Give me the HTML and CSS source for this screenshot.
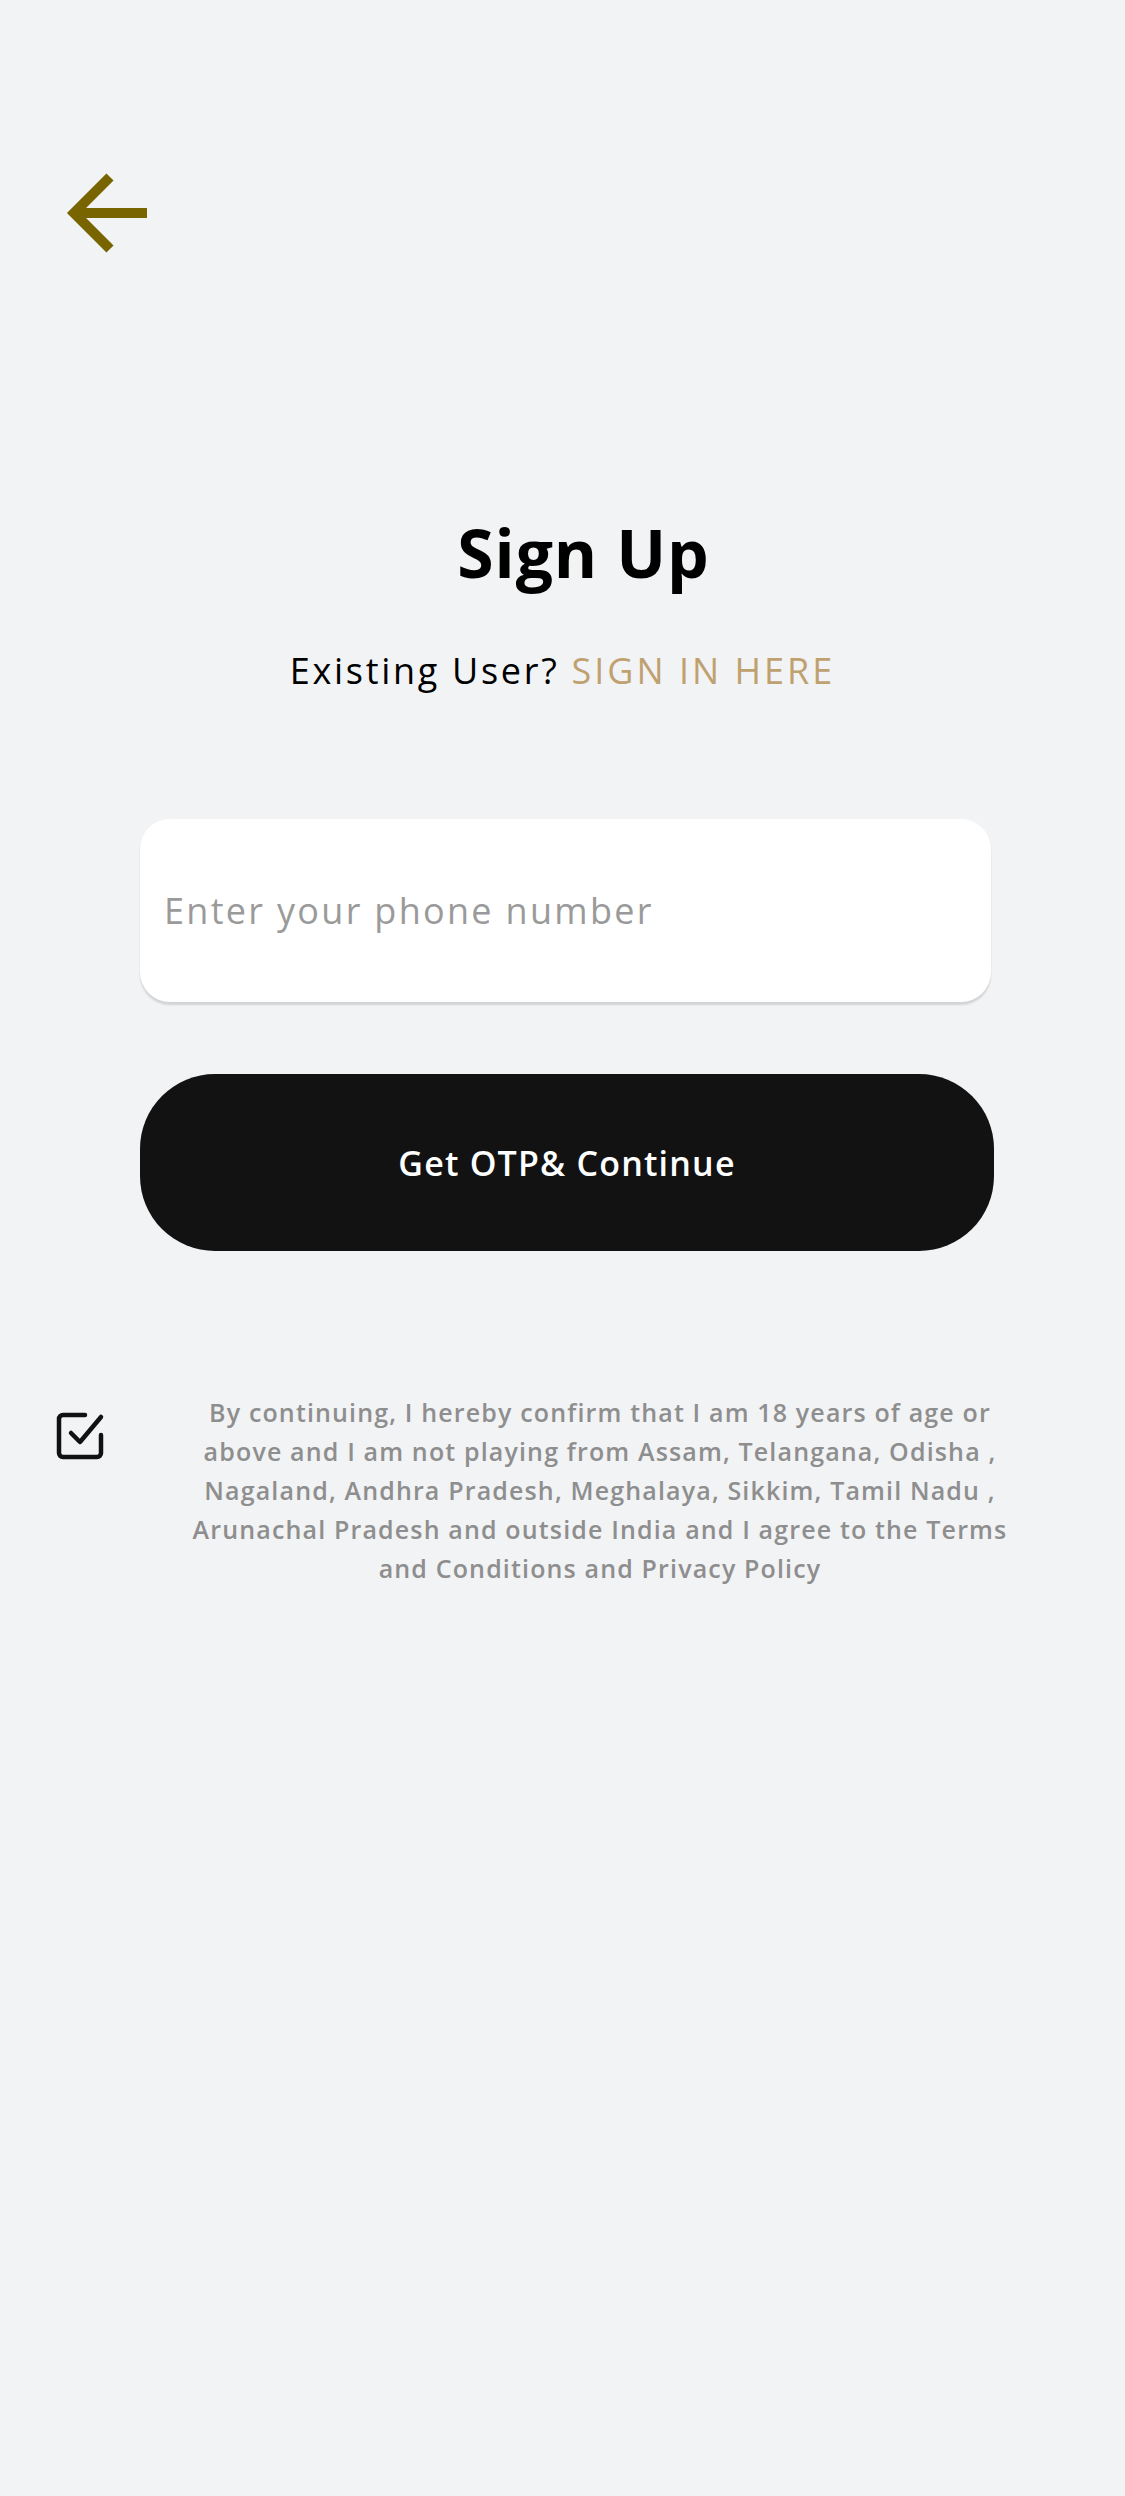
FILE: index.html
```html
<!DOCTYPE html>
<html lang="en">
<head>
<meta charset="utf-8">
<title>Sign Up</title>
<link rel="stylesheet" href="styles.css">
</head>
<body>
<div class="page">
  <header class="topbar">
    <button class="back" aria-label="Back">
      <svg width="100" height="100" viewBox="0 0 100 100">
        <path d="M50 12 L14 48 L50 84" fill="none" stroke="#786500" stroke-width="10" stroke-linejoin="miter" stroke-linecap="butt"/>
        <path d="M16 48 H87" fill="none" stroke="#786500" stroke-width="10"/>
      </svg>
    </button>
  </header>
  <section class="heading">
    <h1 class="title">Sign Up</h1>
    <p class="sub">Existing User? <a class="link" href="#">SIGN IN HERE</a></p>
  </section>
  <form class="form">
    <div class="field"><input class="phone" type="tel" placeholder="Enter your phone number"></div>
    <button type="button" class="cta">Get OTP&amp; Continue</button>
  </form>
  <section class="terms">
    <div class="check">
      <svg width="52" height="50" viewBox="0 0 52 50">
        <path d="M30 4 H8 A4 4 0 0 0 4 8 V42 A4 4 0 0 0 8 46 H42 A4 4 0 0 0 46 42 V24" fill="none" stroke="#111" stroke-width="4.5" stroke-linecap="round"/>
        <path d="M16 22 L25 31 L46 6" fill="none" stroke="#111" stroke-width="4.5" stroke-linecap="round" stroke-linejoin="round"/>
      </svg>
    </div>
    <p class="terms-text">By continuing, I hereby confirm that I am 18 years of age or above and I am not playing from Assam, Telangana, Odisha , Nagaland, Andhra Pradesh, Meghalaya, Sikkim, Tamil Nadu , Arunachal Pradesh and outside India and I agree to the Terms and Conditions and Privacy Policy</p>
  </section>
</div>
</body>
</html>
```
FILE: styles.css
```css
* { box-sizing: border-box; }
html, body { margin: 0; padding: 0; }
body {
  background: #f2f3f5;
  font-family: "Open Sans", "Liberation Sans", sans-serif;
  color: #000;
}
.page {
  width: 1125px;
  min-height: 2496px;
  display: flex;
  flex-direction: column;
}
.topbar {
  padding: 165px 0 0 60px;
  height: 265px;
}
.back {
  border: 0;
  background: none;
  padding: 0;
  width: 100px;
  height: 100px;
  display: block;
}
.back svg { display: block; }
.heading {
  display: flex;
  flex-direction: column;
  align-items: center;
  margin-top: 247px;
}
.title {
  margin: 0;
  padding-left: 42px;
  font-size: 66px;
  font-weight: 700;
  line-height: 80px;
  letter-spacing: 0.9px;
}
.sub {
  margin: 54px 0 0;
  font-size: 36px;
  line-height: 50px;
  letter-spacing: 2.7px;
}
.link {
  color: #bfa170;
  text-decoration: none;
  letter-spacing: 3px;
}
.form {
  margin: 123px 0 0 140px;
  width: 854px;
  display: flex;
  flex-direction: column;
}
.field {
  width: 851px;
  height: 183px;
  background: #fff;
  border-radius: 30px;
  box-shadow: 0 3px 2px rgba(0,0,0,0.13);
  display: flex;
  align-items: center;
  padding-left: 22px;
}
.phone {
  border: 0;
  outline: 0;
  background: transparent;
  font-family: inherit;
  font-size: 36px;
  letter-spacing: 2.3px;
  width: 100%;
  color: #222;
}
.phone::placeholder { color: #9a9a9a; }
.cta {
  margin-top: 72px;
  height: 177px;
  width: 854px;
  border: 0;
  border-radius: 75px;
  background: #121212;
  color: #fff;
  font-family: inherit;
  font-size: 34px;
  font-weight: 600;
  letter-spacing: 1.2px;
}
.terms {
  margin-top: 142px;
  display: flex;
  align-items: flex-start;
}
.check {
  margin-left: 55px;
  margin-top: 18px;
  width: 52px;
  flex: none;
}
.check svg { display: block; }
.terms-text {
  margin: 0 0 0 73px;
  width: 840px;
  text-align: center;
  color: #8e8e8e;
  font-size: 25px;
  font-weight: 600;
  line-height: 39px;
  letter-spacing: 1.15px;
}
```
